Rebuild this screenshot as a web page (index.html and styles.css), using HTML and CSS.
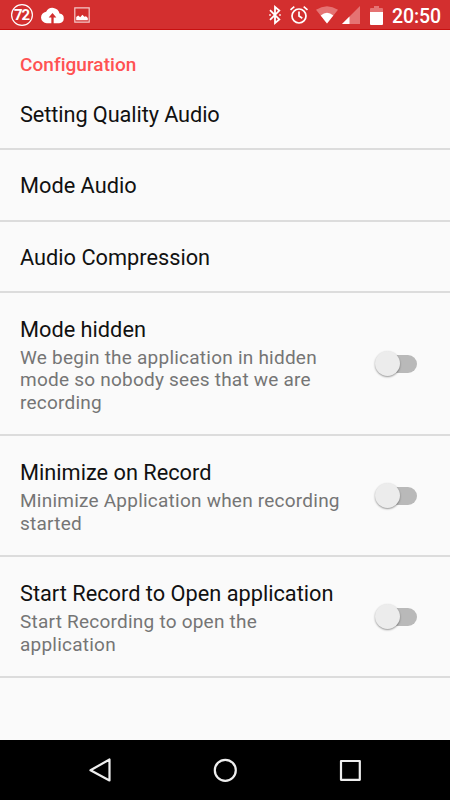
FILE: index.html
```html
<!DOCTYPE html>
<html lang="en">
<head>
<meta charset="utf-8">
<title>Configuration</title>
<link rel="stylesheet" href="styles.css">
</head>
<body>
<div class="screen">
  <header class="status">
    <svg class="badge" width="24" height="24" viewBox="0 0 24 24"><circle cx="12" cy="12" r="10.4" fill="none" stroke="#fff" stroke-width="1.2"/><text x="11.5" y="17.2" text-anchor="middle">72</text></svg>
    <svg class="cloud" width="23" height="23" viewBox="0 0 24 24" fill="#fff"><path d="M19.35 10.04A7.5 7.5 0 0 0 5.35 8.04A6 6 0 0 0 6 20H10.8V14H8l4-4.5L16 14H13.2V20H19a5 5 0 0 0 .35-9.96Z"/></svg>
    <svg class="photo" width="16" height="16" viewBox="0 0 16 16"><path d="M.8.8h14.4v14.4H.8Z" fill="none" stroke="#f5c9c9" stroke-width="1.2"/><path d="M2.2 13.2V10l2-1.5 2 1.7 2.2-2.4 2 2 1.6-.6 1.8 1.8v2.2Z" fill="#fff"/></svg>
    <span class="spacer"></span>
    <svg class="bluetooth" width="14" height="20" viewBox="0 0 14 20" fill="none" stroke="#fff" stroke-width="1.8"><path d="m2 5.2 9.3 9.2L7 18V2l4.3 3.6L2 14.8M1.4 10h1.2M11.4 10h1.2"/></svg>
    <svg class="alarm" width="20" height="20" viewBox="0 0 20 20" fill="none" stroke="#fff" stroke-width="1.7"><circle cx="10" cy="11" r="7"/><path d="M1.5 4.8 5.3 1.6M18.5 4.8l-3.8-3.2M10 6.5V11l3.3 2.2"/></svg>
    <svg class="wifi" width="22" height="18" viewBox="0 0 22 18"><path d="M0 3.8Q11-3.4 22 3.8L11 17.5Z" fill="#e57373"/><path d="M4.7 9.4Q11 4.3 17.3 9.4L11 17.5Z" fill="#fff"/></svg>
    <svg class="signal" width="18" height="18" viewBox="0 0 18 18"><path d="M18 0v18H0Z" fill="#e57373"/><path d="M7.5 10.5V18H0Z" fill="#fff"/></svg>
    <svg class="battery" width="13" height="19" viewBox="0 0 13 19"><path d="M1 2h3V0h5v2h3q1 0 1 1v4H0V3q0-1 1-1Z" fill="#e57373"/><path d="M0 6h13v12q0 1-1 1H1q-1 0-1-1Z" fill="#fff"/></svg>
    <span class="clock">20:50</span>
  </header>
  <main>
    <h1 class="category">Configuration</h1>
    <section class="row first"><h2>Setting Quality Audio</h2></section>
    <section class="row"><h2>Mode Audio</h2></section>
    <section class="row"><h2>Audio Compression</h2></section>
    <section class="row detail three">
      <div><h2>Mode hidden</h2><p>We begin the application in hidden<br>mode so nobody sees that we are<br>recording</p></div>
      <span class="switch"></span>
    </section>
    <section class="row detail">
      <div><h2>Minimize on Record</h2><p>Minimize Application when recording<br>started</p></div>
      <span class="switch"></span>
    </section>
    <section class="row detail">
      <div><h2>Start Record to Open application</h2><p>Start Recording to open the<br>application</p></div>
      <span class="switch"></span>
    </section>
  </main>
  <nav class="nav">
    <svg width="24" height="24" viewBox="0 0 24 24"><path d="M20.5 1.5v21L1.5 12.3Z"/></svg>
    <svg width="24" height="24" viewBox="0 0 24 24"><circle cx="12.3" cy="12.3" r="10.5"/></svg>
    <svg width="24" height="24" viewBox="0 0 24 24"><path d="M3 3h18.8v18.8H3Z"/></svg>
  </nav>
</div>
</body>
</html>
```

FILE: styles.css
```css
* { box-sizing: border-box; }
body { margin: 0; font-family: Roboto, sans-serif; background: #fafafa; }
h1, h2, p { margin: 0; font-weight: 400; white-space: nowrap; }
.screen { width: 450px; height: 800px; display: flex; flex-direction: column; overflow: hidden; }
.status { height: 30px; flex: none; background: #d32f2f; border-bottom: 1px solid #c81010; display: flex; align-items: center; padding: 1px 9px 0 10px; }
.status svg { flex: none; }
.badge text { font: 700 15px Roboto, sans-serif; fill: #fff; letter-spacing: -1px; }
.cloud { margin-left: 7px; }
.photo { margin-left: 10px; }
.spacer { flex: 1; }
.bluetooth { margin-right: 7px; }
.alarm { margin-right: 7px; }
.wifi { margin-right: 4px; }
.signal { margin-right: 10px; }
.battery { margin-right: 9px; }
.clock { width: 49px; color: #fff; font-size: 19.5px; line-height: 29px; padding-top: 2px; font-weight: 500; white-space: nowrap; letter-spacing: -.1px; }
main { flex: 1; }
.category { height: 48.5px; padding: 22.6px 20px 0; font-size: 19px; line-height: 24px; font-weight: 500; color: #ff5252; letter-spacing: .04px; }
.row { height: 71.6px; padding: 3px 20px 0; border-bottom: 2px solid #dcdcdc; display: flex; align-items: center; }
.row h2 { font-size: 21.75px; line-height: 26px; color: #111; }
.row.first { padding-top: 4px; }
.row.first h2 { letter-spacing: -.1px; }
.row.detail { height: 121px; padding-right: 33px; justify-content: space-between; }
.row.three { height: 143px; }
.row p { margin: 4px 0 -.5px; font-size: 19px; line-height: 22.5px; color: #757575; letter-spacing: .23px; }
.switch { position: relative; width: 43px; height: 28px; margin-top: -3px; flex: none; }
.switch::before { content: ""; position: absolute; left: 14px; top: 5px; width: 29px; height: 18px; border-radius: 9px; background: #b9b9b9; }
.switch::after { content: ""; position: absolute; left: 1px; top: 1px; width: 25px; height: 25px; border-radius: 50%; background: #ececec; box-shadow: 0 1px 2px rgba(0,0,0,.4); }
.nav { height: 60px; flex: none; background: #000; padding: 0 88px 0 88.5px; display: flex; align-items: center; justify-content: space-between; }
.nav svg { fill: none; stroke: #eee; stroke-width: 2.2; stroke-linejoin: round; }
```
